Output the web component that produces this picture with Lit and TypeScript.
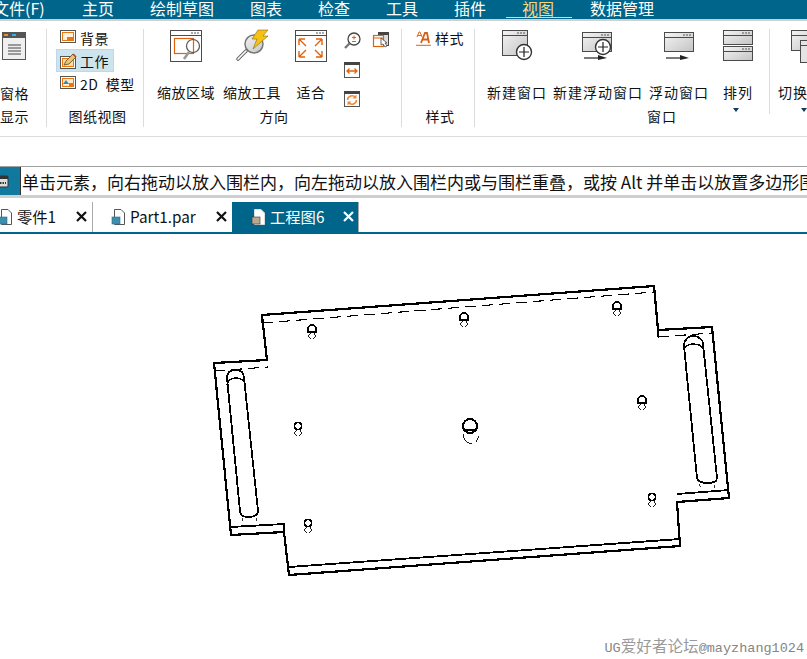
import { LitElement, html, css, svg } from 'lit';
import { customElement } from 'lit/decorators.js';

const GRAD = svg`<defs><linearGradient id="g" x1="0" y1="0" x2="1" y2="1"><stop offset="0" stop-color="#f4f4f4"/><stop offset="1" stop-color="#c4c4c4"/></linearGradient></defs>`;

const win = (x: number, y: number, w: number, h: number, fill = 'url(#g)') => svg`
    <rect x="${x + .5}" y="${y + .5}" width="${w}" height="${h}" fill="${fill}" stroke="#4a4a4a"/>
    <path d="M${x} ${y + 5.5}h${w}" stroke="#4a4a4a"/>
    <path d="M${x + w - 10} ${y + 3}h2m1 0h2m1 0h2" stroke="#555"/>`;

const circlePlus = (x: number, y: number) => svg`
    <circle cx="${x}" cy="${y}" r="7.5" fill="#fff" stroke="#333" stroke-width="1.4"/>
    <path d="M${x - 5} ${y}h10M${x} ${y - 5}v10" stroke="#222" stroke-width="1.2"/>`;

const floatArrow = (x: number, y: number) => svg`
    <path d="M${x} ${y}h16" stroke="#222" stroke-width="1.2"/>
    <path d="M${x + 14} ${y - 3}l9 3-9 2z" fill="#222"/>`;

const ICONS: Record<string, unknown> = {
    zoomArea: svg`${win(1, 0, 31, 31, '#fff')}
        <rect x="5.5" y="8.5" width="19" height="15" fill="none" stroke="#e0620d" stroke-width="1.2"/>
        <circle cx="24" cy="16" r="6.5" fill="none" stroke="#555" stroke-width="1.2"/>
        <path d="M20 22l-5 7" stroke="#999" stroke-width="2.6"/>`,
    zoomTool: svg`<circle cx="19" cy="14" r="9" fill="url(#g)" stroke="#777" stroke-width="1.5"/>
        <path d="M11 21L3 29" stroke="#666" stroke-width="3.600" stroke-linecap="round"/>
        <path d="M11 21L3 29" stroke="#fff" stroke-width="1.600" stroke-linecap="round"/>
        <path d="M23 0h10l-5 6h5L18 19l4-10h-5z" fill="#f6c115" stroke="#8a6d10" stroke-width=".6"/>`,
    fit: svg`${win(1, 0, 31, 31, '#fff')}
        <path d="M5 10l7 7M5 10h6M5 10v6M28 10l-7 7M28 10h-6M28 10v6M5 28l7-7M5 28h6M5 28v-6M28 28l-7-7M28 28h-6M28 28v-6" transform="translate(0 -1)" fill="none" stroke="#e0620d" stroke-width="1.4"/>`,
    newWin: svg`${win(2, 0, 25, 25)}${circlePlus(24, 22)}`,
    newFloat: svg`${win(1, 2, 29, 19)}${circlePlus(22, 17)}${floatArrow(3, 28)}`,
    float: svg`${win(2, 2, 29, 19)}${floatArrow(4, 28)}`,
    arrange: svg`${win(2, 0, 29, 14)}${win(2, 16, 29, 14)}`,
    swap: svg`${win(15, 0, 26, 20)}${win(24, 10, 26, 22, '#e4e4e4')}`,
};

const SMALL: Record<string, unknown> = {
    bg: svg`<rect x=".5" y=".5" width="15" height="12" fill="#fff" stroke="#555"/><rect x="2.5" y="2.5" width="11" height="8" fill="#fff2e2" stroke="#e8770f"/><rect x="7" y="7" width="6" height="3" fill="#e8770f"/>`,
    work: svg`<rect x=".5" y="3.5" width="15" height="12" fill="#fff" stroke="#555"/><rect x="2.5" y="5.5" width="11" height="8" fill="#ffd9a8" stroke="#e8770f"/><path d="M4 12l2-4 7-7 3 3-7 7z" fill="#e9c46a" stroke="#5a4a20" stroke-width=".8"/><path d="M13 1l3 3" stroke="#c0392b" stroke-width="1.6"/>`,
    model: svg`<rect x=".5" y=".5" width="15" height="12" fill="#fff" stroke="#555"/><rect x="2.5" y="2.5" width="11" height="8" fill="#ffe9cf" stroke="#e8770f"/><path d="M3 8l3-4 3 4z" fill="#2a8fb0"/><rect x="9" y="7" width="4" height="3" fill="#e8770f"/>`,
    zoomIn: svg`<circle cx="10" cy="7" r="6" fill="#fff" stroke="#444" stroke-width="1.3"/><path d="M5.5 11.5L1 16" stroke="#777" stroke-width="2.4"/><path d="M8 5.5h4M10 3.5v4M8 9.5h4" stroke="#e0620d"/>`,
    copy: svg`<rect x="5.5" y=".5" width="10" height="13" fill="#ddd" stroke="#444"/><rect x="5" y="0" width="11" height="3" fill="#444"/><rect x=".5" y="3.5" width="10" height="11" fill="#fff" stroke="#e0620d" stroke-width="1.2"/><path d="M.5 6h10" stroke="#e0620d"/><path d="M8 6v7l2-1 2 3 2-1-2-3h2z" fill="#fff" stroke="#444" stroke-width=".8"/>`,
    fitW: svg`<rect x=".5" y=".5" width="15" height="15" fill="#fff" stroke="#555"/><rect x="0" y="0" width="16" height="3" fill="#444"/><path d="M3 9h10M5.5 6.5L3 9l2.5 2.5M10.5 6.5L13 9l-2.5 2.5" fill="none" stroke="#e0620d" stroke-width="1.3"/>`,
    refresh: svg`<rect x=".5" y=".5" width="15" height="15" fill="#fff" stroke="#555"/><rect x="0" y="0" width="16" height="3" fill="#444"/><path d="M3.500 9a4.500 4.500 0 0 1 8-2.500M12.500 9a4.500 4.500 0 0 1-8 2.500" fill="none" stroke="#ec8a3c" stroke-width="1.6"/><path d="M12.500 3.500v4h-4zM3.500 14.500v-4h4z" fill="#ec8a3c"/>`,
};

// counterbored holes: upper circle plus the hidden lower one, seen as two side arcs
const D_HOLES = [[312, 328], [464, 316], [617, 305], [642, 399]];
const ROUND_HOLES = [[298, 425], [308, 522], [652, 496]];

const sideArcs = (x: number, y: number) => svg`
    <path stroke-width=".9" d="M${x - 2} ${y + 3.500}L${x - 4} ${y + 7}L${x - 1.500} ${y + 10}M${x + 2} ${y + 3.500}L${x + 4} ${y + 7}L${x + 1.500} ${y + 10}"/>`;

@customElement('part-drawing')
export class PartDrawing extends LitElement {
    static styles = css`
        :host { display: block; position: relative; height: 426px; background: #fff; overflow: hidden; }
        svg { display: block; }
        .watermark {
            position: absolute;
            right: 3px;
            bottom: 3px;
            font: 13.500px/16px "Liberation Mono", monospace;
            color: #858585;
            white-space: nowrap;
        }
        .watermark span { font: 15.600px/16px "Noto Sans CJK SC", sans-serif; color: #9a9a9a; }
    `;

    render() {
        return html`
            <svg width="807" height="426" viewBox="0 233 807 426" shape-rendering="crispEdges" fill="none" stroke="#000">
                <path stroke-width="2.2" d="M262 314L654 285L658 329L712 326L729 497L677 501L680 545L289 574L284 531L231 534L214 362L267 359Z"/>
                <path stroke-width="1.8" d="M231 526L284 523L284 531M289 566L680 538M677 493L729 489"/>
                <path stroke-width="1.1" stroke-dasharray="11 6" d="M262 322L654 291M214 370L268 366M658 336L712 332"/>
                <path stroke-width="1.1" d="M262 314V322M658 329V336"/>
                <path stroke-width="1.8" d="M227 377C227 371 230 369 235 369C241 369 244 372 244 377L258 510C258 514 254 516 248 516C243 516 240 514 240 510L227 377Z"/>
                <path stroke-width="1.4" d="M227 384C228 379 231 377 236 377C241 377 244 379 245 383"/>
                <path stroke-width="1.8" d="M684 345C684 339 688 335 693 335C699 335 703 339 703 343L717 477C717 480 713 482 707 482C701 482 698 480 697 477L684 345Z"/>
                <path stroke-width="1.4" d="M684 349C685 345 689 343 693 343C698 343 702 345 703 348"/>
                <path stroke-width=".8" stroke-dasharray="3 3" d="M240 511L243 520M258 511L256 520M697 478L701 487M717 478L714 487"/>
                ${D_HOLES.map(([x, y]) => svg`
                    <path stroke-width="1.800" d="M${x - 4} ${y + 3}V${y}A4 4 0 0 1 ${x + 4} ${y}V${y + 3}Z"/>
                    ${sideArcs(x, y)}`)}
                ${ROUND_HOLES.map(([x, y]) => svg`
                    <circle cx="${x}" cy="${y}" r="3.500" stroke-width="1.800"/>
                    ${sideArcs(x, y)}`)}
                <circle cx="470" cy="425" r="7" stroke-width="2"/>
                <path stroke-width="2" d="M463 429H477"/>
                <path stroke-width=".9" d="M463 433C464 441 469 443 472 442M479 435L476 441"/>
            </svg>
            <div class="watermark">UG<span>爱好者论坛</span>@mayzhang1024</div>
        `;
    }
}

@customElement('app-root')
export class AppRoot extends LitElement {
    static styles = css`
        :host {
            display: block;
            width: 807px;
            height: 659px;
            overflow: hidden;
            background: #fff;
            font-family: "Noto Sans CJK SC", "Noto Sans", sans-serif;
            color: #111;
        }
        svg { display: block; overflow: visible; }

        .menu {
            display: flex;
            gap: 36px;
            height: 19px;
            margin-left: -7px;
            background: #00658a;
            color: #fff;
            font-size: 16px;
            line-height: 16px;
            white-space: nowrap;
            border-bottom: 2px solid #d0d0d0;
        }
        .menu span { position: relative; height: 19px; }
        .menu .file { width: 53px; }
        .menu .active { color: #f6d77a; }
        .menu .active::after {
            content: '';
            position: absolute;
            left: -16px;
            right: -18px;
            top: 17px;
            height: 1px;
            background: #f6d77a;
        }

        .ribbon {
            display: flex;
            height: 106px;
            padding-top: 8px;
            box-sizing: border-box;
            font-size: 14px;
            line-height: 18px;
            white-space: nowrap;
            letter-spacing: .5px;
        }
        .group {
            display: grid;
            grid-template-rows: 77px 20px;
            box-sizing: border-box;
            border-right: 1px solid #dcdcdc;
            flex: none;
        }
        .group-label { text-align: center; line-height: 20px; }
        .tools { display: flex; padding-top: 1px; }
        .tool {
            display: flex;
            flex-direction: column;
            align-items: center;
            flex: none;
        }
        .tool-icon { width: 34px; height: 34px; flex: none; }
        .tool-text { margin-top: 19px; }
        .drop {
            width: 0;
            height: 0;
            margin: 7px 4px 0 0;
            border: 3px solid transparent;
            border-top: 4px solid #123a5a;
            border-bottom: 0;
        }

        .g-pane { width: 47px; }
        .pane-col { display: flex; flex-direction: column; }
        .pane-icon { margin: 3px 0 0 2px; }
        .pane-text { margin-top: 23px; }
        .g-pane .group-label { text-align: left; }

        .g-sheet { width: 97px; }
        .g-sheet .group-label { padding-left: 5px; }
        .rows { display: flex; flex-direction: column; margin-top: -3px; padding-left: 9px; }
        .row {
            display: flex;
            align-items: center;
            gap: 4px;
            width: 58px;
            height: 23px;
            box-sizing: border-box;
            padding-left: 3px;
            border: 1px solid transparent;
        }
        .row.on { background: #cde4ec; border-color: #bcd8ea; }
        .row svg { flex: none; }

        .g-view { width: 258px; }
        .g-view .tools { padding-left: 13px; }
        .g-view .group-label { padding-left: 3px; }
        .gap8 { margin-left: 8px; }
        .gap13 { margin-left: 13px; }
        .small-grid {
            display: grid;
            grid-template-columns: 16px 16px;
            grid-auto-rows: 29.500px;
            column-gap: 13px;
            margin: 2px 0 0 16px;
        }

        .g-style { width: 73px; }
        .g-style .group-label { padding-left: 4px; }
        .style-row { display: flex; align-items: center; gap: 4px; padding-left: 14px; height: 18px; }

        .g-window { width: 294px; border-right: 0; letter-spacing: 1px; }
        .g-window .tools { padding-left: 12px; }
        .g-window .group-label { padding-left: 80px; }
        .gap6 { margin-left: 6px; }
        .gap12 { margin-left: 12px; }

        .g-swap { border-left: 1px solid #dcdcdc; height: 85px; padding-left: 6px; flex: 1; letter-spacing: 1px; }
        .g-swap .drop { margin: 7px 0 0 22px; }

        .rule { height: 1px; margin-top: 9px; margin-bottom: -10px; background: #dcdcdc; }
        .cmd {
            display: flex;
            height: 28px;
            margin-top: 39px;
            border-top: 1px solid #a0a0a0;
            border-bottom: 3px solid #cfcfcf;
            font-size: 17px;
            line-height: 29px;
            white-space: nowrap;
            overflow: hidden;
        }
        .cmd-icon {
            display: flex;
            align-items: center;
            width: 20px;
            flex: none;
            background: #11789e;
        }
        .cmd-text { padding-left: 1px; border-left: 1px solid #333; }

        .tabs {
            display: flex;
            height: 32px;
            margin-top: 4px;
            box-sizing: border-box;
            border-bottom: 2px solid #00658a;
            font-size: 15.300px;
            line-height: 27px;
            white-space: nowrap;
        }
        .tab {
            display: flex;
            align-items: center;
            height: 30px;
            padding-bottom: 1px;
            box-sizing: border-box;
            flex: none;
        }
        .close { margin-left: auto; flex: none; }
        .tab-1 { width: 93px; border-right: 1px solid #aaa; padding-right: 5px; }
        .tab-2 { width: 139px; padding-left: 18px; padding-right: 5px; }
        .tab-3 { width: 127px; padding-left: 19px; padding-right: 4px; background: #00658a; color: #fff; border-right: 1px solid #aaa; }
        .tab-icon { margin-right: 4px; flex: none; }
    `;

    tool(name: string, label: string, cls = '', drop = false) {
        return html`
            <div class="tool ${cls}">
                <svg class="tool-icon" viewBox="0 0 34 34">${ICONS[name]}</svg>
                <div class="tool-text">${label}</div>
                ${drop ? html`<div class="drop"></div>` : ''}
            </div>
        `;
    }

    small(name: string) {
        return html`<svg width="16" height="16" viewBox="0 0 16 16">${SMALL[name]}</svg>`;
    }

    tabIcon(offset = 0, light = false) {
        const stroke = light ? '#ddd' : '#555';
        return html`
            <svg class="tab-icon" width="15" height="16" viewBox="0 0 15 16" style="margin-left:${offset}px">
                <path d="M3.500 .5H10L13.500 4V15.500H3.500Z" fill="#fff" stroke="${stroke}"/>
                <rect x="1" y="8" width="8" height="7" fill="${light ? '#b9a98f' : '#3d8fb0'}" stroke="${light ? '#333' : '#2a6e8a'}" stroke-width=".6"/>
            </svg>
        `;
    }

    closeIcon() {
        return html`
            <svg class="close" width="11" height="11" viewBox="0 0 11 11">
                <path d="M1 1L10 10M10 1L1 10" stroke="currentColor" stroke-width="2.200"/>
            </svg>
        `;
    }

    render() {
        return html`
            <svg width="0" height="0" style="position:absolute">${GRAD}</svg>
            <div class="menu">
                <span class="file">文件(F)</span>
                <span>主页</span>
                <span>绘制草图</span>
                <span>图表</span>
                <span>检查</span>
                <span>工具</span>
                <span>插件</span>
                <span class="active">视图</span>
                <span>数据管理</span>
            </div>

            <div class="ribbon">
                <div class="group g-pane">
                    <div class="pane-col">
                        <svg class="pane-icon" width="24" height="29" viewBox="0 0 24 29">
                            <rect x=".5" y=".5" width="23" height="27" fill="#efefef" stroke="#555"/>
                            <rect x="0" y="0" width="24" height="6" fill="#555"/>
                            <rect x="2" y="2" width="4" height="2" fill="#f08a24"/>
                            <rect x="10" y="2" width="4" height="2" fill="#2fb5dc"/>
                            <path d="M6 13h13M6 16h13M6 19h13M6 22h13" stroke="#444"/>
                        </svg>
                        <div class="pane-text">窗格</div>
                    </div>
                    <div class="group-label">显示</div>
                </div>

                <div class="group g-sheet">
                    <div class="rows">
                        <div class="row">${this.small('bg')}背景</div>
                        <div class="row on">${this.small('work')}工作</div>
                        <div class="row">${this.small('model')}2D&nbsp;&nbsp;模型</div>
                    </div>
                    <div class="group-label">图纸视图</div>
                </div>

                <div class="group g-view">
                    <div class="tools">
                        ${this.tool('zoomArea', '缩放区域')}
                        ${this.tool('zoomTool', '缩放工具', 'gap8')}
                        ${this.tool('fit', '适合', 'gap13')}
                        <div class="small-grid">
                            ${this.small('zoomIn')}${this.small('copy')}
                            ${this.small('fitW')}<span></span>
                            ${this.small('refresh')}<span></span>
                        </div>
                    </div>
                    <div class="group-label">方向</div>
                </div>

                <div class="group g-style">
                    <div class="style-row">
                        <svg width="15" height="15" viewBox="0 0 15 15">
                            <path d="M1 6L3 1H4L6 6M2 4.500H5" fill="none" stroke="#e0620d" stroke-width="1"/>
                            <path d="M5 12L9 2H11L13 12M7 8.500H12" fill="none" stroke="#d2601a" stroke-width="1.800"/>
                            <path d="M0 14.300H15" stroke="#e0620d"/>
                        </svg>
                        样式
                    </div>
                    <div class="group-label">样式</div>
                </div>

                <div class="group g-window">
                    <div class="tools">
                        ${this.tool('newWin', '新建窗口')}
                        ${this.tool('newFloat', '新建浮动窗口', 'gap6')}
                        ${this.tool('float', '浮动窗口', 'gap6')}
                        ${this.tool('arrange', '排列', 'gap12', true)}
                    </div>
                    <div class="group-label">窗口</div>
                </div>

                <div class="group g-swap">
                    <div class="tools">${this.tool('swap', '切换', '', true)}</div>
                </div>
            </div>
            <div class="rule"></div>

            <div class="cmd">
                <div class="cmd-icon">
                    <svg width="9" height="11" viewBox="0 0 9 11">
                        <rect x="-3" y="0" width="11" height="11" rx="1" fill="#ddd" stroke="#333"/>
                        <rect x="-3" y="0" width="11" height="3" fill="#333"/>
                        <path d="M0 7h6" stroke="#333" stroke-width="2" stroke-dasharray="1.500 1"/>
                    </svg>
                </div>
                <div class="cmd-text">单击元素，向右拖动以放入围栏内，向左拖动以放入围栏内或与围栏重叠，或按 Alt 并单击以放置多边形围栏。</div>
            </div>

            <div class="tabs">
                <div class="tab tab-1">${this.tabIcon(-2)}零件1${this.closeIcon()}</div>
                <div class="tab tab-2">${this.tabIcon()}Part1.par${this.closeIcon()}</div>
                <div class="tab tab-3">${this.tabIcon(0, true)}工程图6${this.closeIcon()}</div>
            </div>

            <part-drawing></part-drawing>
        `;
    }
}
